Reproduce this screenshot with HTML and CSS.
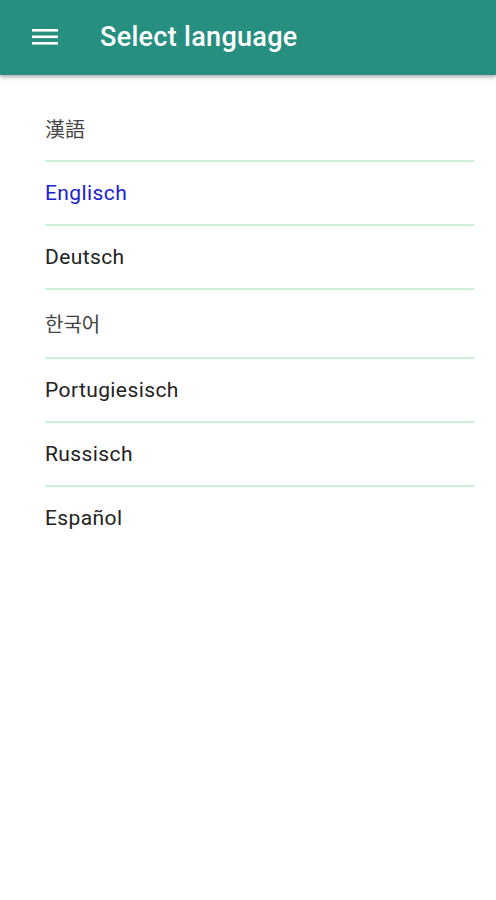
FILE: index.html
```html
<html>

<head>
    <title>Select language</title>
    <link rel="stylesheet" href="styles.css">
</head>

<body>
	<div class="toolbar">
		<svg class="menu" width="26" height="18" viewBox="0 0 26 18">
			<rect x="0" y="1" width="26" height="2.6" fill="#fff"/>
			<rect x="0" y="7.5" width="26" height="2.6" fill="#fff"/>
			<rect x="0" y="14" width="26" height="2.6" fill="#fff"/>
		</svg>
		<span class="title">Select language</span>
	</div>

	<ul class="languages">
		<li class="cjk">漢語</li>
		<li class="selected">Englisch</li>
		<li>Deutsch</li>
		<li class="korean">한국어</li>
		<li>Portugiesisch</li>
		<li>Russisch</li>
		<li>Español</li>
	</ul>
</body>

</html>
```

FILE: styles.css
```css
body {
	margin: 0;
	font-family: Roboto, "Noto Sans CJK KR", sans-serif;
	background-color: white;
}

.toolbar {
	height: 75px;
	background-color: #268f80;
	display: flex;
	align-items: center;
	padding-left: 32px;
	box-shadow: 0 2px 4px rgba(0, 0, 0, 0.35);
}

.menu {
	margin-top: -1px;
}

.title {
	color: white;
	font-size: 27px;
	font-weight: 500;
	letter-spacing: 0.3px;
	margin-left: 42px;
	margin-top: -1px;
}

.languages {
	list-style: none;
	margin: 0;
	padding: 23px 22px 0 45px;
}

.languages li {
	font-size: 21px;
	letter-spacing: 0.4px;
	color: #222;
	height: 62px;
	line-height: 62px;
	border-bottom: 2px solid #cdf0da;
}

.languages li:last-child {
	border-bottom: none;
}

.languages .cjk {
	font-family: "Noto Sans CJK TC", sans-serif;
	color: #444;
	font-size: 20px;
	letter-spacing: 0;
}

.languages .korean {
	font-family: "Noto Sans CJK KR", sans-serif;
	color: #444;
	font-size: 20px;
	letter-spacing: 0;
	height: 67px;
	line-height: 67px;
}

.languages .selected {
	color: #2020d0;
}
```
